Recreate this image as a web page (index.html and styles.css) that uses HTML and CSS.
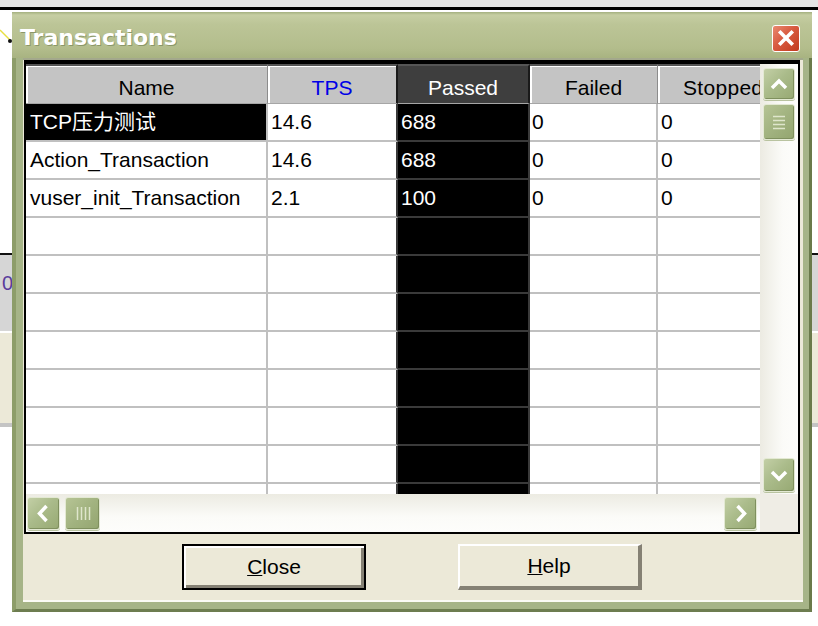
FILE: index.html
```html
<!DOCTYPE html>
<html>
<head>
<meta charset="utf-8">
<link rel="stylesheet" href="styles.css">
</head>
<body>
<div class="desktop">
  <svg class="bg-line" width="12" height="50" viewBox="0 0 12 50"><path d="M0 30 L10 40" stroke="#e8e040" stroke-width="1.5"/><circle cx="10" cy="41" r="2" fill="#111"/></svg>
  <span class="bg-zero">0</span>
  <div class="window">
    <div class="titlebar">
      <span class="title">Transactions</span>
      <div class="xbtn"><svg width="26" height="25" viewBox="0 0 26 25"><path d="M7.5 6.5 L18.5 17.5 M18.5 6.5 L7.5 17.5" stroke="#fff" stroke-width="3.6" stroke-linecap="square"/></svg></div>
    </div>
    <div class="frame">
      <div class="client">
        <div class="listview">
          <div class="lv-top">
            <div class="grid">
              <div class="row hdr">
                <div class="cell c1">Name</div>
                <div class="cell c2 tps">TPS</div>
                <div class="cell c3">Passed</div>
                <div class="cell c4">Failed</div>
                <div class="cell c5">Stopped</div>
              </div>
              <div class="row">
                <div class="cell c1 sel">TCP压力测试</div>
                <div class="cell c2">14.6</div>
                <div class="cell c3">688</div>
                <div class="cell c4">0</div>
                <div class="cell c5">0</div>
              </div>
              <div class="row">
                <div class="cell c1">Action_Transaction</div>
                <div class="cell c2">14.6</div>
                <div class="cell c3">688</div>
                <div class="cell c4">0</div>
                <div class="cell c5">0</div>
              </div>
              <div class="row">
                <div class="cell c1">vuser_init_Transaction</div>
                <div class="cell c2">2.1</div>
                <div class="cell c3">100</div>
                <div class="cell c4">0</div>
                <div class="cell c5">0</div>
              </div>
              <div class="row"><div class="cell c1"></div><div class="cell c2"></div><div class="cell c3"></div><div class="cell c4"></div><div class="cell c5"></div></div>
              <div class="row"><div class="cell c1"></div><div class="cell c2"></div><div class="cell c3"></div><div class="cell c4"></div><div class="cell c5"></div></div>
              <div class="row"><div class="cell c1"></div><div class="cell c2"></div><div class="cell c3"></div><div class="cell c4"></div><div class="cell c5"></div></div>
              <div class="row"><div class="cell c1"></div><div class="cell c2"></div><div class="cell c3"></div><div class="cell c4"></div><div class="cell c5"></div></div>
              <div class="row"><div class="cell c1"></div><div class="cell c2"></div><div class="cell c3"></div><div class="cell c4"></div><div class="cell c5"></div></div>
              <div class="row"><div class="cell c1"></div><div class="cell c2"></div><div class="cell c3"></div><div class="cell c4"></div><div class="cell c5"></div></div>
              <div class="row"><div class="cell c1"></div><div class="cell c2"></div><div class="cell c3"></div><div class="cell c4"></div><div class="cell c5"></div></div>
              <div class="row"><div class="cell c1"></div><div class="cell c2"></div><div class="cell c3"></div><div class="cell c4"></div><div class="cell c5"></div></div>
            </div>
            <div class="vscroll">
              <div class="sb-btn up"><svg width="30" height="30" viewBox="0 0 30 30"><path d="M8 19 L15 12 L22 19" fill="none" stroke="#fff" stroke-width="3.5"/></svg></div>
              <div class="sb-btn vthumb"><svg width="30" height="34" viewBox="0 0 30 34"><path d="M9 11.5 H21 M9 15.5 H21 M9 19.5 H21 M9 23.5 H21" stroke="#dfe6cc" stroke-width="1.5"/></svg></div>
              <div class="sb-btn down"><svg width="30" height="32" viewBox="0 0 30 32"><path d="M8 13 L15 20 L22 13" fill="none" stroke="#fff" stroke-width="3.5"/></svg></div>
            </div>
          </div>
          <div class="lv-bottom">
            <div class="hscroll">
              <div class="sb-btn left"><svg width="31" height="31" viewBox="0 0 31 31"><path d="M18.5 8 L11.5 15.5 L18.5 23" fill="none" stroke="#fff" stroke-width="3.5"/></svg></div>
              <div class="sb-btn hthumb"><svg width="33" height="31" viewBox="0 0 33 31"><path d="M11.5 9 V22 M15.5 9 V22 M19.5 9 V22 M23.5 9 V22" stroke="#dfe6cc" stroke-width="1.5"/></svg></div>
              <div class="sb-btn right"><svg width="31" height="31" viewBox="0 0 31 31"><path d="M12.5 8 L19.5 15.5 L12.5 23" fill="none" stroke="#fff" stroke-width="3.5"/></svg></div>
            </div>
            <div class="corner"></div>
          </div>
        </div>
        <div class="btnrow">
          <button class="btn default"><u>C</u>lose</button>
          <button class="btn"><u>H</u>elp</button>
        </div>
      </div>
    </div>
  </div>
</div>
</body>
</html>
```

FILE: styles.css
```css
html, body {
  margin: 0;
  padding: 0;
}
body {
  width: 818px;
  height: 626px;
  overflow: hidden;
  font-family: "Liberation Sans", Arial, sans-serif;
  background: linear-gradient(to bottom,
    #e4e4e4 0, #e4e4e4 7px,
    #000 7px, #000 10px,
    #fff 10px, #fff 253px,
    #111 253px, #111 255px,
    #d6d6d6 255px, #d6d6d6 331px,
    #fff 331px, #fff 333px,
    #ece9d8 333px, #ece9d8 423px,
    #c4c4c4 423px, #c4c4c4 427px,
    #fff 427px);
}
.desktop {
  position: relative;
  width: 818px;
  height: 626px;
}
.bg-line {
  position: absolute;
  left: 0;
  top: 0;
}
.bg-zero {
  position: absolute;
  left: 2px;
  top: 272px;
  font-size: 20px;
  color: #5a3c9c;
}
.window {
  position: absolute;
  left: 12px;
  top: 12px;
  width: 800px;
  height: 600px;
  display: flex;
  flex-direction: column;
}
.titlebar {
  flex: none;
  height: 46px;
  display: flex;
  align-items: flex-start;
  background: linear-gradient(to bottom, #a4b07f 0, #c6cea3 3px, #bcc597 12px, #b3bd8c 36px, #a8b381 46px);
}
.title {
  margin: 15px 0 0 8px;
  font-family: "DejaVu Sans", sans-serif;
  font-weight: bold;
  font-size: 22px;
  line-height: 22px;
  color: #fff;
  text-shadow: 1px 1px 0 #8b9769;
}
.xbtn {
  margin: 13px 12px 0 auto;
  width: 28px;
  height: 27px;
  box-sizing: border-box;
  border: 1px solid #fff;
  border-radius: 3px;
  background: linear-gradient(135deg, #e98a70 0, #d85a3f 45%, #c23a1f 100%);
  display: flex;
  align-items: center;
  justify-content: center;
}
.frame {
  flex: 1;
  display: flex;
  border-left: 4px solid #8d9d69;
  border-right: 3px solid #6a7a4a;
  border-bottom: 3px solid #6d7d50;
  padding: 0 6px 7px 7px;
  background: #a6b487;
}
.client {
  flex: 1;
  display: flex;
  flex-direction: column;
  background: #ece9d8;
  border-bottom: 2px solid #fbfbf5;
  padding: 2px 3px 10px 1px;
  box-shadow: inset 0 2px 0 #a3a88c;
}
.listview {
  flex: none;
  height: 474px;
  box-sizing: border-box;
  border: 2px solid #000;
  border-top-width: 4px;
  display: flex;
  flex-direction: column;
  background: #fff;
}
.lv-top {
  display: flex;
  height: 430px;
}
.grid {
  width: 734px;
  overflow: hidden;
  background: #fff;
}
.row {
  display: flex;
  height: 38px;
}
.cell {
  flex: none;
  box-sizing: border-box;
  height: 38px;
  border-right: 2px solid #c0c0c0;
  border-bottom: 2px solid #c0c0c0;
  padding-left: 3px;
  font-size: 21px;
  line-height: 36px;
  color: #000;
  white-space: nowrap;
  overflow: hidden;
}
.c1 { width: 242px; padding-left: 4px; }
.c2 { width: 130px; border-right-color: #3a3a3a; }
.c3 {
  width: 132px;
  background: #000;
  color: #fff;
  border-right-color: #3a3a3a;
  border-bottom-color: #3a3a3a;
}
.c4 { width: 128px; padding-left: 2px; }
.c5 { width: 130px; }
.c1.sel {
  background: #000;
  color: #fff;
  font-family: "Liberation Sans", "Noto Sans CJK SC", sans-serif;
}
.hdr {
  height: 40px;
}
.hdr .cell {
  height: 40px;
  padding: 11px 0 0 0;
  line-height: 21px;
  text-align: center;
  background: #c4c4c4;
  border-top: 2px solid #555;
  border-right: 1px solid #8c8c8c;
  border-bottom: 1px solid #a6a6a6;
  box-shadow: inset 2px 1px 0 #fff;
}
.hdr .c1 { width: 242px; }
.hdr .c2 { border-right: 2px solid #1a1a1a; }
.hdr .tps { color: #0000e6; }
.hdr .c3 {
  background: #3e3e3e;
  color: #fff;
  border-right: 2px solid #1a1a1a;
  box-shadow: none;
}
.hdr .c5 {
  padding-left: 25px;
  text-align: left;
  letter-spacing: 0.3px;
}
.vscroll {
  width: 38px;
  box-sizing: border-box;
  padding: 4px 3px 2px 3px;
  display: flex;
  flex-direction: column;
  background: linear-gradient(to right, #ecebe2, #fbfbf8 60%, #fdfdfb);
}
.sb-btn {
  box-sizing: border-box;
  border: 1px solid #e3e9d3;
  border-radius: 3px;
  background: linear-gradient(135deg, #c3cfa6 0, #aabb8a 45%, #97a973 100%);
  box-shadow: inset -1px -1px 0 #7f905e, 0 1px 0 #b9c3a0;
  display: flex;
  align-items: center;
  justify-content: center;
  flex: none;
}
.vthumb, .hthumb {
  background: linear-gradient(135deg, #b6c495 0, #a2b380 50%, #93a56f 100%);
}
.up { width: 32px; height: 32px; }
.vthumb { width: 32px; height: 36px; margin-top: 4px; }
.down { width: 32px; height: 34px; margin-top: auto; }
.lv-bottom {
  display: flex;
  height: 38px;
}
.hscroll {
  width: 734px;
  box-sizing: border-box;
  padding-top: 3px;
  display: flex;
  align-items: flex-start;
  background: linear-gradient(to bottom, #ecebe2, #fbfbf8 60%, #fdfdfb);
}
.left { width: 33px; height: 33px; margin-left: 1px; }
.hthumb { width: 35px; height: 33px; margin-left: 5px; }
.right { width: 33px; height: 33px; margin-left: auto; margin-right: 3px; }
.corner {
  width: 38px;
  background: #efede5;
}
.btnrow {
  display: flex;
  justify-content: center;
  gap: 92px;
  margin-top: 10px;
}
.btn {
  width: 184px;
  height: 46px;
  box-sizing: border-box;
  padding: 0;
  margin: 0;
  background: #ece9d8;
  border-style: solid;
  border-width: 2px 4px 4px 2px;
  border-color: #fff #858174 #858174 #fff;
  font-family: "Liberation Sans", Arial, sans-serif;
  font-size: 21px;
  color: #000;
  display: flex;
  align-items: center;
  justify-content: center;
}
.btn u {
  text-decoration-thickness: 1px;
}
.btn.default {
  border: 2px solid #000;
  box-shadow: inset 2px 2px 0 #fff, inset -3px -3px 0 #858174;
}
```
